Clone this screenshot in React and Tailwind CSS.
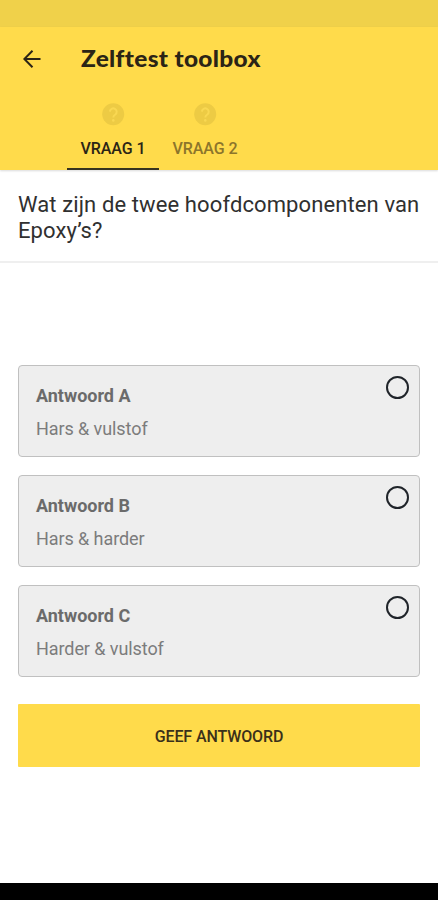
import React, { useState } from 'react';

const tabs = ['VRAAG 1', 'VRAAG 2'];

const answers = [
  { id: 'A', text: 'Hars & vulstof' },
  { id: 'B', text: 'Hars & harder' },
  { id: 'C', text: 'Harder & vulstof' },
];

const BackIcon = () => (
  <svg className="h-[18px] w-[18px]" viewBox="0 0 18 18" fill="none" stroke="#2b2416" strokeWidth="2">
    <path d="M17.5 9H1.5M9.5 0.8L1.3 9l8.2 8.2" />
  </svg>
);

const QuestionIcon = () => (
  <svg className="h-[23px] w-[23px]" viewBox="0 0 23 23" fill="none">
    <circle cx="11.2" cy="11.3" r="11" fill="#edcb44" />
    <path
      d="M7.9 8.6a3.4 3.4 0 1 1 5.4 2.9c-1.3.9-2 1.5-2 2.9"
      stroke="#f9d852"
      strokeWidth="2"
    />
    <circle cx="11.3" cy="17.4" r="1.3" fill="#f9d852" />
  </svg>
);

const AnswerCard = ({ answer, selected, onSelect }) => (
  <button
    onClick={onSelect}
    className="flex h-[92px] w-full items-start justify-between rounded-[4px] border-[1.5px] border-[#c0c0c0] bg-[#eeeeee] pl-[17px] pr-[10px] text-left"
  >
    <div className="pt-[19px]">
      <div className="text-[18px] font-bold leading-[22px] tracking-[-0.02px] text-[#6b6b6b]">Antwoord {answer.id}</div>
      <div className="mt-[11px] text-[18px] leading-[22px] tracking-[-0.08px] text-[#7c7c7c]">{answer.text}</div>
    </div>
    {/* Radio */}
    <span className="mt-[10px] flex h-[23px] w-[23px] items-center justify-center rounded-full border-2 border-[#20242a]">
      {selected && <span className="h-3 w-3 rounded-full bg-[#20242a]" />}
    </span>
  </button>
);

const App = () => {
  const [activeTab, setActiveTab] = useState(0);
  const [selected, setSelected] = useState(null);

  return (
    <div className="flex h-[900px] w-full flex-col overflow-hidden bg-white font-['Roboto',sans-serif]">
      {/* Status bar */}
      <div className="h-[27px] shrink-0 bg-[#f0d14a]" />

      {/* Header */}
      <header className="z-10 h-[143px] shrink-0 bg-[#ffdb4b] shadow-[0_1px_2px_rgba(0,0,0,0.15)]">
        <div className="flex h-[63px] items-center pl-[23px]">
          <button aria-label="Terug">
            <BackIcon />
          </button>
          <h1 className="ml-10 origin-left scale-x-[1.11] whitespace-nowrap font-['Lato',sans-serif] text-[22px] font-black leading-7 tracking-[0.3px] text-[#2b2416]">
            Zelftest toolbox
          </h1>
        </div>

        <nav className="flex h-20 pl-[67px]">
          {tabs.map((tab, index) => (
            <button
              key={tab}
              onClick={() => setActiveTab(index)}
              className={`flex w-[92px] flex-col items-center justify-start border-b-2 pt-[13px] text-[16px] font-medium leading-5 tracking-[-0.1px] ${
                activeTab === index
                  ? 'border-[#38341f] text-[#2b2416]'
                  : 'border-transparent text-[#8c752b]'
              }`}
            >
              <QuestionIcon />
              <span className="mt-[13px] whitespace-nowrap">{tab}</span>
            </button>
          ))}
        </nav>
      </header>

      {/* Question */}
      <section className="h-[93px] shrink-0 border-b-2 border-[#efefef] px-[18px] pt-[22px]">
        <p className="whitespace-nowrap text-[22px] leading-[26px] tracking-[0.11px] text-[#303030]">
          Wat zijn de twee hoofdcomponenten van
          <br />
          Epoxy’s?
        </p>
      </section>

      {/* Answers */}
      <main className="flex-1 px-[18px] pt-[101.5px]">
        <div className="flex flex-col gap-[18.2px]">
          {answers.map((answer) => (
            <AnswerCard
              key={answer.id}
              answer={answer}
              selected={selected === answer.id}
              onSelect={() => setSelected(answer.id)}
            />
          ))}
        </div>
        <button className="mt-[27px] h-[63px] w-full rounded-[1px] bg-[#ffdb4b] pt-[3px] text-[16px] font-medium tracking-[-0.1px] text-[#3a301a]">
          GEEF ANTWOORD
        </button>
      </main>

      {/* Navigation bar */}
      <div className="h-[17px] shrink-0 bg-black" />
    </div>
  );
};

export default App;
